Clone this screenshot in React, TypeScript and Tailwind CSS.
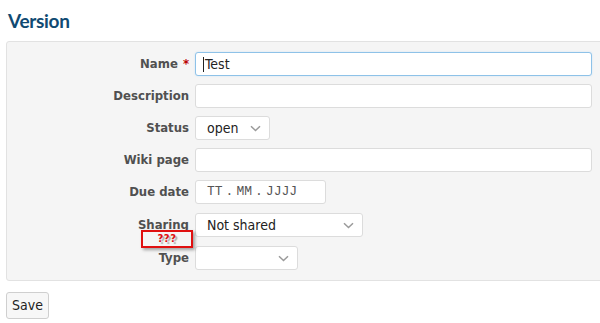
import React from "react"

const labelFont = { fontFamily: "'DejaVu Sans Condensed', 'DejaVu Sans', sans-serif" }

function Chevron() {
  return (
    <svg width="11" height="7" viewBox="0 0 11 7" className="shrink-0">
      <path d="M1 1.2 L5.5 5.5 L10 1.2" fill="none" stroke="#9a9a9a" strokeWidth="1.5" />
    </svg>
  )
}

function Row({ label, required, children }: { label: string; required?: boolean; children: React.ReactNode }) {
  return (
    <div className="flex items-center h-6">
      <div className="w-[183px] pr-[1px] text-right text-[13px] font-bold text-[#505050]" style={labelFont}>
        {label}
        {required && <span className="text-[#bb0000] ml-[5px]">*</span>}
      </div>
      <div className="ml-[5px] flex-1 flex">{children}</div>
    </div>
  )
}

function TextInput({ focused, value }: { focused?: boolean; value?: string }) {
  return (
    <div
      className={
        "h-6 w-[397px] rounded-[3px] bg-white flex items-center pl-[7px] text-[14px] text-[#222] " +
        (focused ? "border border-[#8ec2e8] shadow-[0_0_2px_#cde4f5]" : "border border-[#dcdcdc]")
      }
      style={labelFont}
    >
      {focused && <span className="w-px h-[15px] bg-[#222] mr-[1px]" />}
      {value}
    </div>
  )
}

function Select({ width, value }: { width: string; value?: string }) {
  return (
    <div
      className={"h-6 rounded-[3px] bg-white border border-[#dcdcdc] flex items-center justify-between pl-[11px] pr-[8px] text-[14px] text-[#222] " + width}
      style={labelFont}
    >
      <span>{value}</span>
      <Chevron />
    </div>
  )
}

export default function App() {
  return (
    <div className="w-[600px] h-[323px] overflow-hidden bg-white relative">
      <h2 className="pl-2 pt-[7px] h-[40px] text-[19px] font-bold text-[#104a72] tracking-[-0.3px]" style={{ fontFamily: "Lato, 'Open Sans', sans-serif" }}>
        Version
      </h2>
      <div className="ml-[6px] mr-[-4px] mt-[1px] border border-[#e2e2e2] bg-[#f5f5f5] rounded-[3px] pt-[10px] pb-[10px] flex flex-col gap-[8px] relative">
        <Row label="Name" required>
          <TextInput focused value="Test" />
        </Row>
        <Row label="Description">
          <TextInput />
        </Row>
        <Row label="Status">
          <Select width="w-[75px]" value="open" />
        </Row>
        <Row label="Wiki page">
          <TextInput />
        </Row>
        <Row label="Due date">
          <div
            className="h-6 w-[131px] rounded-[3px] bg-white border border-[#dcdcdc] flex items-center gap-[3px] pl-[11px] text-[13px] text-[#555]"
            style={{ fontFamily: "'Liberation Mono', monospace" }}
          >
            <span>TT</span>
            <span>.</span>
            <span>MM</span>
            <span>.</span>
            <span>JJJJ</span>
          </div>
        </Row>
        <div className="pt-px">
          <Row label="Sharing">
            <Select width="w-[168px]" value="Not shared" />
          </Row>
        </div>
        <div className="pt-px">
          <Row label="Type">
            <Select width="w-[103px]" />
          </Row>
        </div>
        <div className="absolute left-[134px] top-[188px] w-[52px] h-[18px] border-2 border-[#e01010] shadow-[2px_2px_3px_rgba(0,0,0,0.35)] flex items-center justify-center">
          <span className="text-[10px] font-bold text-[#e01010] leading-none tracking-[0.5px] [text-shadow:2px_2px_1px_rgba(0,0,0,0.3)]" style={{ fontFamily: "'DejaVu Sans', sans-serif" }}>
            ???
          </span>
        </div>
      </div>
      <button
        className="ml-[6px] mt-[11px] h-[27px] w-[43px] rounded-[3px] border border-[#cfcfcf] bg-[#f7f7f7] text-[14px] text-[#222]"
        style={labelFont}
      >
        Save
      </button>
    </div>
  )
}
